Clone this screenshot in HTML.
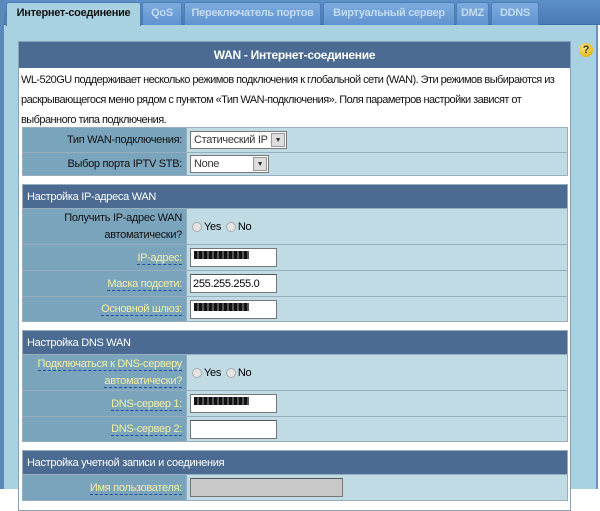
<!DOCTYPE html>
<html><head><meta charset="utf-8"><style>
*{margin:0;padding:0;box-sizing:border-box}
body{width:600px;height:489px;overflow:hidden;background:#fff;font-family:"Liberation Sans",sans-serif;font-size:11px;position:relative;letter-spacing:-0.3px}
.main{position:absolute;left:0;top:0;width:598px;height:489px;background:#a8d2e2;border-left:4px solid #5a88b8;border-right:2px solid #6e93b8}
.tabbar{position:absolute;left:0;top:0;width:598px;height:25px;background:linear-gradient(#5d8fc9,#4a7ab3);border-bottom:1px solid #3f6ea6}
.tab{position:absolute;top:2px;height:23px;color:#c4daf0;font-weight:bold;font-size:11px;line-height:21px;text-align:center;background:linear-gradient(#7cacdf,#5f92cf);border:1px solid #4d7db5;border-bottom:none;border-radius:3px 3px 0 0}
.tab.act{background:#a8d2e2;color:#111;height:24px;top:2px}
.panel{position:absolute;left:14px;top:41px;width:553px;background:#fff;border:1px solid #8aa0b5;height:470px}
.hdr{height:26px;background:#4b6b92;color:#fff;font-weight:bold;font-size:12px;text-align:center;line-height:26px}
.desc{padding:2px 2px;line-height:20px;font-size:11px;letter-spacing:-0.55px;color:#111;height:59px;white-space:nowrap}
table{border-collapse:collapse;margin-left:3px;width:546px}
td{border:1px solid #96aebd;font-size:11px}
td.l{background:#7aa3bc;width:164px;text-align:right;padding-right:4px;color:#111}
td.v{background:#c0dbe4;padding-left:3px}
.y{color:#f3f0a0;border-bottom:1px dashed #2050a0}
.sh{background:#4b6b92;color:#fff;height:24px;padding-left:4px;text-align:left;font-size:11px}
.gap{height:8px}
input.t{width:87px;height:19px;border:1px solid #777;border-top-color:#555;font-size:11px;letter-spacing:-0.3px;font-family:"Liberation Sans",sans-serif;padding-left:2px;vertical-align:middle}
.sel{display:inline-block;border:1px solid #777;background:#fff;height:18px;line-height:16px;padding-left:3px;position:relative;vertical-align:middle;color:#333}
.sel b{position:absolute;right:1px;top:1px;width:14px;height:14px;background:#ddd;border:1px solid #999;font-size:7px;text-align:center;line-height:13px;font-weight:normal}
.r{display:inline-block;width:10px;height:10px;border-radius:50%;background:#e4e4e4;border:1px solid #aaa;vertical-align:middle;margin:0 2px 0 2px}
.blur{background:repeating-linear-gradient(90deg,#111 0 3px,#555 3px 5px);display:inline-block;height:8px;vertical-align:middle}
.q{position:absolute;left:575px;top:43px;width:14px;height:14px;border-radius:50%;background:radial-gradient(circle at 40% 35%,#ffe97a,#d9a200);color:#333;font-weight:bold;font-size:11px;text-align:center;line-height:14px}
</style></head><body>
<div class="main">
<div class="tabbar"></div>
<div class="tab act" style="left:2px;width:135px">Интернет-соединение</div>
<div class="tab" style="left:138px;width:40px">QoS</div>
<div class="tab" style="left:180px;width:137px">Переключатель портов</div>
<div class="tab" style="left:319px;width:132px">Виртуальный сервер</div>
<div class="tab" style="left:452px;width:33px">DMZ</div>
<div class="tab" style="left:487px;width:48px">DDNS</div>
<div class="q">?</div>
<div class="panel">
<div class="hdr">WAN - Интернет-соединение</div>
<div class="desc">WL-520GU поддерживает несколько режимов подключения к глобальной сети (WAN). Эти режимов выбираются из<br>раскрывающегося меню рядом с пунктом «Тип WAN-подключения». Поля параметров настройки зависят от<br>выбранного типа подключения.</div>
<table>
<tr style="height:25px"><td class="l">Тип WAN-подключения:</td><td class="v"><span class="sel" style="width:97px">Статический IP<b>▼</b></span></td></tr>
<tr style="height:23px"><td class="l">Выбор порта IPTV STB:</td><td class="v"><span class="sel" style="width:79px">None<b>▼</b></span></td></tr>
</table>
<div class="gap"></div>
<table>
<tr><td class="sh" colspan="2">Настройка IP-адреса WAN</td></tr>
<tr style="height:36px"><td class="l" style="line-height:17px">Получить IP-адрес WAN<br>автоматически?</td><td class="v"><span class="r"></span>Yes <span class="r"></span>No</td></tr>
<tr style="height:26px"><td class="l"><span class="y">IP-адрес:</span></td><td class="v"><span style="display:inline-block;width:87px;height:19px;background:#fff;border:1px solid #777;vertical-align:middle;padding-left:3px"><span class="blur" style="width:55px"></span></span></td></tr>
<tr style="height:26px"><td class="l"><span class="y">Маска подсети:</span></td><td class="v"><input class="t" value="255.255.255.0"></td></tr>
<tr style="height:25px"><td class="l"><span class="y">Основной шлюз:</span></td><td class="v"><span style="display:inline-block;width:87px;height:19px;background:#fff;border:1px solid #777;vertical-align:middle;padding-left:3px"><span class="blur" style="width:55px"></span></span></td></tr>
</table>
<div class="gap"></div>
<table>
<tr><td class="sh" colspan="2">Настройка DNS WAN</td></tr>
<tr style="height:36px"><td class="l" style="line-height:17px"><span class="y">Подключаться к DNS-серверу</span><br><span class="y">автоматически?</span></td><td class="v"><span class="r"></span>Yes <span class="r"></span>No</td></tr>
<tr style="height:26px"><td class="l"><span class="y">DNS-сервер 1:</span></td><td class="v"><span style="display:inline-block;width:87px;height:19px;background:#fff;border:1px solid #777;vertical-align:middle;padding-left:3px"><span class="blur" style="width:55px"></span></span></td></tr>
<tr style="height:25px"><td class="l"><span class="y">DNS-сервер 2:</span></td><td class="v"><input class="t" value=""></td></tr>
</table>
<div class="gap"></div>
<table>
<tr><td class="sh" colspan="2">Настройка учетной записи и соединения</td></tr>
<tr style="height:26px"><td class="l"><span class="y">Имя пользователя:</span></td><td class="v"><input class="t" style="width:153px;background:#c8c8c8"></td></tr>
</table>
</div>
</div>
</body></html>
